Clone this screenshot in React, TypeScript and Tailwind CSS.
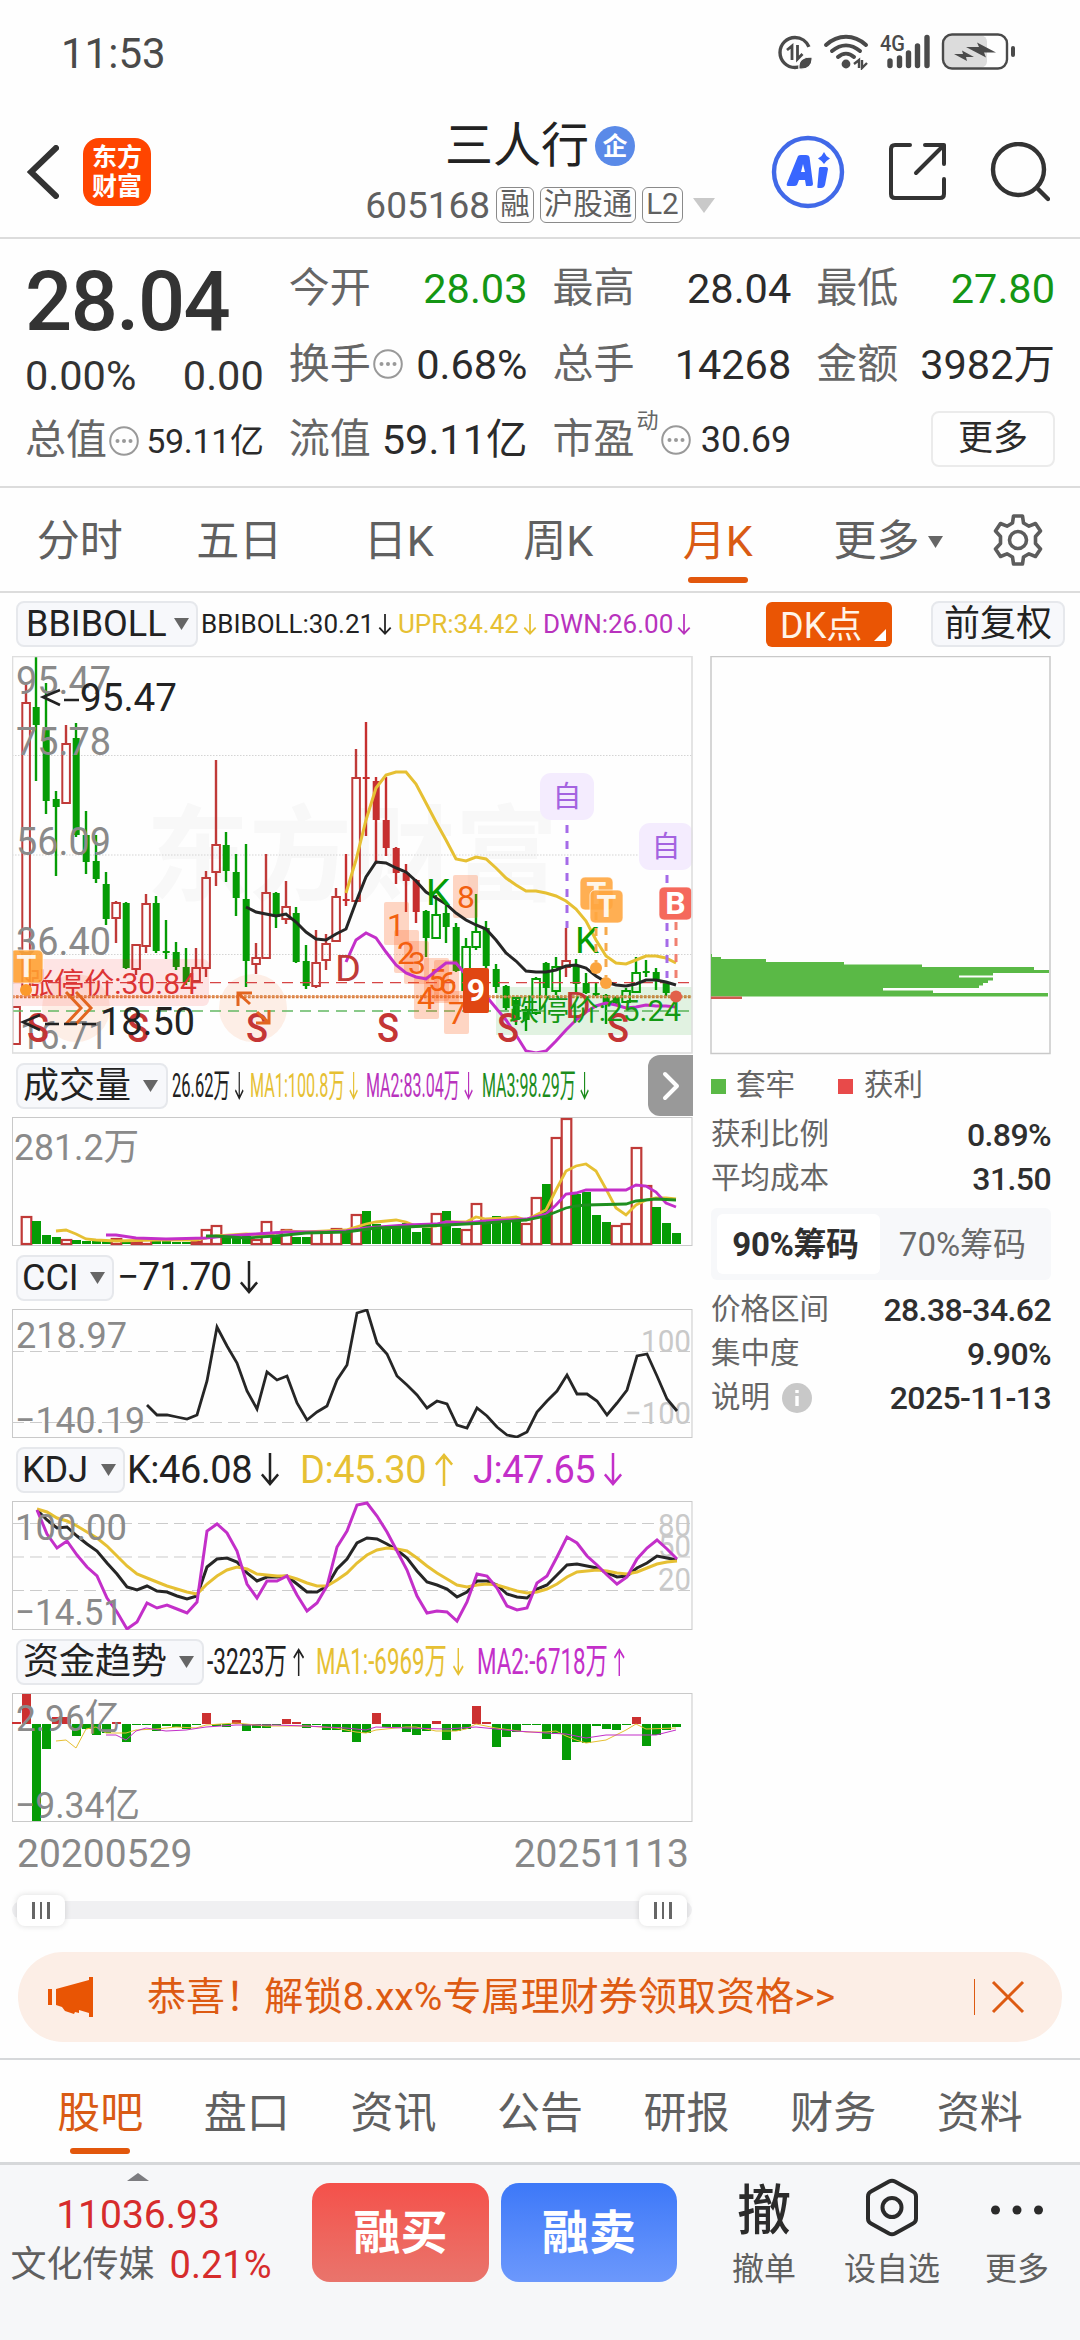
import type { ReactNode } from 'react';

const RED = '#c03a38';
const GREEN = '#059c05';
const YELLOW = '#e6c033';
const PURPLE = '#c32fc9';
const INK = '#262626';

// one bar per month, 10px apart
const barX = (i: number) => 16 + i * 10;

const toPoints = (start: number, ys: number[]) => ys.map((y, i) => `${start + i * 10},${y}`).join(' ');

type CandleKind = 'r' | 'R' | 'g' | 'h';
type Candle = [CandleKind, number, number, number, number];

// kind, high, body top, body bottom, low (r/h hollow, R/g filled)
const CANDLES: Candle[] = [
  ['r', 1006, 1006, 1044, 1044], ['r', 683, 702, 990, 990], ['g', 656, 707, 725, 781], ['g', 683, 730, 801, 814],
  ['g', 791, 799, 807, 876], ['r', 725, 743, 803, 803], ['g', 723, 738, 835, 837], ['g', 811, 835, 862, 874],
  ['g', 835, 861, 879, 883], ['g', 872, 884, 919, 925], ['r', 901, 902, 918, 943], ['g', 902, 903, 968, 969],
  ['r', 944, 944, 969, 975], ['r', 894, 903, 946, 953], ['g', 896, 903, 951, 953], ['g', 920, 951, 953, 959],
  ['g', 942, 952, 967, 970], ['g', 948, 967, 982, 985], ['r', 948, 967, 981, 982], ['r', 871, 877, 968, 977],
  ['r', 760, 844, 872, 886], ['g', 832, 845, 871, 882], ['g', 854, 872, 898, 916], ['g', 844, 899, 961, 987],
  ['r', 943, 957, 964, 974], ['r', 854, 892, 958, 958], ['g', 892, 893, 917, 928], ['r', 881, 906, 919, 924],
  ['g', 907, 913, 962, 963], ['g', 945, 961, 986, 989], ['r', 930, 962, 986, 988], ['r', 934, 943, 960, 970],
  ['r', 888, 896, 941, 941], ['R', 854, 899, 901, 906], ['r', 749, 777, 901, 901], ['R', 722, 777, 779, 836],
  ['R', 777, 781, 820, 864], ['R', 777, 820, 848, 856], ['R', 847, 848, 873, 884], ['R', 864, 873, 881, 912],
  ['R', 879, 880, 912, 923], ['g', 910, 911, 938, 957], ['h', 895, 914, 938, 938], ['g', 902, 913, 927, 943],
  ['g', 923, 927, 971, 972], ['h', 938, 946, 990, 990], ['h', 894, 931, 947, 950], ['g', 921, 928, 966, 968],
  ['g', 964, 969, 987, 993], ['g', 985, 986, 1008, 1010], ['g', 998, 1000, 1020, 1025], ['g', 1006, 1010, 1020, 1031],
  ['h', 977, 978, 1013, 1015], ['g', 962, 963, 988, 996], ['h', 957, 966, 991, 995], ['r', 928, 960, 967, 977],
  ['g', 959, 966, 984, 994], ['g', 973, 983, 993, 994], ['g', 982, 993, 995, 996], ['g', 994, 995, 1003, 1024],
  ['g', 996, 997, 1003, 1004], ['h', 988, 990, 1002, 1002], ['h', 957, 972, 992, 992], ['g', 960, 971, 973, 977],
  ['g', 968, 972, 980, 990], ['g', 982, 983, 993, 996],
];

const BOLL_MID = [907, 912, 914, 916, 914, 922, 932, 939, 940, 934, 929, 902, 877, 862, 863, 868, 872, 881, 892, 898, 904, 913, 920, 925, 929, 940, 953, 961, 971, 972, 972, 970, 966, 965, 968, 976, 982, 985, 986, 984, 980, 980, 982, 985];
const BOLL_UP = [893, 860, 820, 788, 775, 772, 772, 784, 803, 822, 840, 859, 861, 857, 859, 868, 878, 885, 891, 891, 893, 896, 901, 909, 921, 940, 956, 963, 964, 960, 956, 956, 958, 963];
const BOLL_DOWN = [962, 940, 933, 938, 952, 965, 973, 977, 979, 971, 963, 963, 975, 990, 996, 1008, 1020, 1035, 1051, 1053, 1051, 1041, 1030, 1020, 1012, 1006, 1003, 1005, 1008, 1007, 1005, 1006, 1006, 1007];

// r = hollow red, g = filled green, with the bar's top
const VOLUME: [string, number][] = [
  ['r', 1243], ['r', 1216], ['g', 1221], ['g', 1235], ['g', 1237], ['r', 1239], ['g', 1240], ['g', 1241], ['g', 1241], ['g', 1241],
  ['r', 1238], ['g', 1241], ['r', 1241], ['r', 1238], ['g', 1241], ['g', 1241], ['g', 1242], ['g', 1242], ['r', 1241], ['r', 1229],
  ['r', 1225], ['g', 1237], ['g', 1238], ['g', 1236], ['r', 1239], ['r', 1221], ['g', 1236], ['r', 1229], ['g', 1237], ['g', 1237],
  ['r', 1231], ['r', 1231], ['r', 1228], ['g', 1232], ['r', 1214], ['g', 1211], ['g', 1224], ['g', 1226], ['g', 1226], ['g', 1223],
  ['g', 1232], ['g', 1228], ['r', 1213], ['g', 1211], ['g', 1228], ['r', 1229], ['r', 1203], ['g', 1224], ['g', 1216], ['g', 1219],
  ['g', 1219], ['r', 1223], ['r', 1197], ['g', 1184], ['r', 1137], ['r', 1118], ['g', 1194], ['g', 1192], ['g', 1215], ['g', 1222],
  ['r', 1225], ['r', 1223], ['r', 1147], ['r', 1185], ['g', 1207], ['g', 1223], ['g', 1233],
];
const VOL_MA1 = '56,1231 66,1230 76,1234 86,1239 96,1240 116,1241 156,1240 196,1240 216,1236 246,1234 266,1235 286,1231 306,1232 346,1230 366,1224 376,1222 396,1220 406,1222 416,1226 436,1226 446,1222 466,1222 476,1217 486,1219 506,1218 516,1217 526,1220 536,1215 546,1210 556,1190 566,1171 576,1166 586,1164 596,1171 606,1189 616,1208 626,1215 636,1205 646,1200 656,1198 666,1198 676,1199';
const VOL_MA2 = '106,1235 116,1235 136,1238 166,1239 206,1238 226,1236 256,1234 286,1232 326,1232 346,1231 366,1228 406,1225 436,1224 446,1222 466,1223 486,1221 506,1220 526,1219 546,1214 556,1205 566,1194 576,1193 586,1190 606,1190 626,1190 636,1185 646,1186 656,1192 666,1203 676,1207';
const VOL_MA3 = '206,1236 216,1236 246,1238 276,1236 306,1233 346,1232 376,1228 406,1227 446,1225 486,1223 526,1220 546,1216 556,1212 566,1208 576,1206 586,1205 626,1204 636,1201 656,1199 676,1200';

const CCI = [1405, 1415, 1415, 1417, 1419, 1415, 1381, 1327, 1346, 1363, 1391, 1409, 1372, 1380, 1376, 1403, 1420, 1412, 1406, 1380, 1365, 1313, 1310, 1343, 1354, 1376, 1385, 1395, 1408, 1401, 1404, 1425, 1428, 1408, 1416, 1427, 1435, 1437, 1432, 1412, 1401, 1391, 1375, 1394, 1394, 1401, 1415, 1403, 1390, 1356, 1354, 1376, 1399, 1411];

const KDJ_J = [1510, 1534, 1548, 1541, 1555, 1567, 1576, 1598, 1612, 1629, 1622, 1603, 1608, 1605, 1609, 1613, 1602, 1531, 1524, 1533, 1551, 1584, 1598, 1581, 1581, 1576, 1595, 1611, 1603, 1586, 1547, 1531, 1505, 1503, 1516, 1532, 1551, 1570, 1596, 1613, 1611, 1612, 1621, 1602, 1574, 1576, 1588, 1606, 1610, 1608, 1583, 1576, 1557, 1537, 1543, 1556, 1565, 1575, 1584, 1577, 1559, 1548, 1540, 1549, 1559];
const KDJ_K = [1510, 1520, 1528, 1527, 1536, 1544, 1551, 1563, 1574, 1587, 1590, 1586, 1591, 1592, 1596, 1599, 1596, 1567, 1559, 1558, 1562, 1573, 1581, 1577, 1577, 1576, 1584, 1592, 1592, 1586, 1569, 1559, 1543, 1538, 1539, 1544, 1550, 1558, 1571, 1582, 1585, 1589, 1597, 1592, 1581, 1581, 1585, 1594, 1597, 1598, 1589, 1585, 1575, 1565, 1564, 1566, 1568, 1573, 1577, 1576, 1568, 1563, 1556, 1558, 1560];
const KDJ_D = [1509, 1512, 1518, 1521, 1526, 1532, 1538, 1546, 1556, 1566, 1574, 1578, 1582, 1586, 1589, 1592, 1594, 1584, 1576, 1570, 1567, 1569, 1574, 1575, 1576, 1576, 1579, 1583, 1586, 1586, 1580, 1573, 1563, 1555, 1550, 1548, 1549, 1551, 1558, 1566, 1573, 1579, 1585, 1587, 1585, 1584, 1585, 1588, 1591, 1593, 1592, 1589, 1584, 1577, 1572, 1571, 1570, 1571, 1573, 1574, 1572, 1568, 1564, 1562, 1561];

// far end of each month's bar; above the zero line is inflow
const FLOW = [1722, 1694, 1821, 1749, 1717, 1717, 1736, 1729, 1735, 1733, 1722, 1742, 1725, 1725, 1731, 1726, 1727, 1729, 1725, 1713, 1726, 1727, 1720, 1731, 1728, 1728, 1725, 1719, 1722, 1728, 1725, 1730, 1730, 1732, 1742, 1733, 1713, 1727, 1727, 1732, 1735, 1731, 1721, 1740, 1731, 1729, 1706, 1722, 1747, 1737, 1732, 1725, 1725, 1739, 1734, 1760, 1742, 1743, 1726, 1729, 1730, 1725, 1717, 1746, 1735, 1730, 1727];
const FLOW_ZERO = 1724;
const FLOW_MA1 = '56,1741 66,1740 76,1748 86,1729 96,1727 106,1733 126,1733 136,1730 156,1729 176,1727 196,1728 206,1725 236,1723 266,1726 306,1726 336,1728 356,1732 366,1733 376,1730 406,1727 416,1727 436,1731 456,1731 466,1729 476,1724 496,1728 526,1732 546,1732 556,1731 566,1736 576,1740 586,1743 606,1740 626,1730 636,1724 646,1729 676,1728';
const FLOW_MA2 = '106,1735 116,1735 126,1740 136,1731 146,1728 166,1731 186,1730 206,1727 236,1725 276,1725 306,1726 346,1728 366,1730 376,1727 406,1728 446,1729 476,1727 516,1731 546,1733 566,1734 586,1738 606,1735 636,1735 656,1735 676,1730';

const COUNTS = [
  { n: '1', x: 384, y: 902, tx: 396, ty: 936 },
  { n: '2', x: 394, y: 930, tx: 406, ty: 964 },
  { n: '3', x: 404, y: 941, tx: 417, ty: 974 },
  { n: '4', x: 414, y: 976, tx: 426, ty: 1009 },
  { n: '5', x: 424, y: 958, tx: 437, ty: 991 },
  { n: '6', x: 434, y: 960, tx: 448, ty: 994 },
  { n: '7', x: 444, y: 991, tx: 457, ty: 1024 },
  { n: '8', x: 453, y: 875, tx: 466, ty: 908 },
];

// top, height, width of each price level
const CHIPS = [
  [954, 3, 1], [957, 2.5, 10], [959, 3, 55], [962, 3, 133], [964.5, 3, 211], [967, 3, 323], [970, 3, 338], [973, 2.5, 282],
  [975, 3, 248], [977.5, 3, 282], [980, 3, 277], [983, 2.5, 272], [985, 3, 268], [988, 3, 172], [990.5, 3, 222], [993, 3.5, 337],
];

interface LabelProps {
  x: number;
  y: number;
  w?: number;
  size: number;
  fill: string;
  anchor?: 'start' | 'middle' | 'end';
  weight?: number;
  children: string;
}

function Label({ x, y, w, size, fill, anchor = 'start', weight = 400, children }: LabelProps) {
  return (
    <text
      x={x}
      y={y}
      fontSize={size}
      fill={fill}
      textAnchor={anchor}
      fontWeight={weight}
      textLength={w}
      lengthAdjust={w ? 'spacingAndGlyphs' : undefined}
    >
      {children}
    </text>
  );
}

function Badge({ x, y, color, letter }: { x: number; y: number; color: string; letter: string }) {
  return (
    <g>
      <rect x={x} y={y} width={33} height={33} rx={5} fill={color} stroke="#fff" strokeWidth={1} strokeOpacity={0.7} />
      <Label x={x + 16.5} y={y + 27} size={32} fill="#fff" anchor="middle" weight={700}>{letter}</Label>
    </g>
  );
}

function SelfMark({ x, y }: { x: number; y: number }) {
  return (
    <g>
      <rect x={x} y={y} width={54} height={47} rx={11} fill="#f4ecfe" />
      <Label x={x + 27} y={y + 34} size={29} fill="#a463e0" anchor="middle">自</Label>
    </g>
  );
}

function CandleBar({ candle, x }: { candle: Candle; x: number }) {
  const [kind, high, top, bottom, low] = candle;
  const color = kind === 'r' ? RED : kind === 'R' ? '#c62f2f' : GREEN;
  const hollow = kind === 'r' || kind === 'h';
  return (
    <g>
      {high < top && <line x1={x} x2={x} y1={high} y2={top} stroke={color} strokeWidth={2.4} />}
      {low > bottom && <line x1={x} x2={x} y1={bottom} y2={low} stroke={color} strokeWidth={2.4} />}
      {hollow ? (
        <rect x={x - 3.7} y={top + 1} width={7.6} height={Math.max(bottom - top - 1, 2)} fill="none" stroke={color} strokeWidth={2} />
      ) : (
        <rect x={x - 3.3} y={top} width={7} height={Math.max(bottom - top, 2)} fill={color} />
      )}
    </g>
  );
}

function PriceChart() {
  return (
    <svg className="block" width={681} height={398} viewBox="12 656 681 398">
      <Label x={146} y={893} w={412} size={104} fill="#f8f8f8" weight={700}>东方财富</Label>
      {[755.5, 855, 954.5].map((y) => (
        <line key={y} x1={12} x2={692} y1={y} y2={y} stroke="#d4d4d4" strokeWidth={1.2} strokeDasharray="1.5 1.5" />
      ))}
      <circle cx={76} cy={1008} r={34} fill="#fdeee6" />
      <circle cx={253} cy={1008} r={34} fill="#fdeee6" />
      {CANDLES.map((c, i) => (
        <CandleBar key={i} candle={c} x={barX(i)} />
      ))}
      <line x1={12} x2={692} y1={982.7} y2={982.7} stroke="#d64545" strokeWidth={1.2} strokeDasharray="11 7" />
      <line x1={12} x2={692} y1={1011} y2={1011} stroke="#63b863" strokeWidth={1.4} strokeDasharray="11 7" />
      <line x1={12} x2={692} y1={996.7} y2={996.7} stroke="#d5752f" strokeWidth={3} strokeDasharray="2.6 1.4" />
      <line x1={12} x2={692} y1={996.7} y2={996.7} stroke="#e9a275" strokeWidth={0.8} />
      <path d="M12 959 H203 a6 6 0 0 1 6 6 V1000 a6 6 0 0 1 -6 6 H12 Z" fill="#ff1010" fillOpacity={0.11} />
      <rect x={496} y={987} width={196} height={48} fill="#10a010" fillOpacity={0.12} />

      {COUNTS.map((c) => (
        <g key={c.n}>
          <rect x={c.x} y={c.y} width={25} height={43} rx={2} fill="#ff5a14" fillOpacity={0.25} />
          <Label x={c.tx} y={c.ty} size={32} fill="#f2600f" anchor="middle">{c.n}</Label>
        </g>
      ))}

      <polyline points={toPoints(246, BOLL_MID)} fill="none" stroke={INK} strokeWidth={3} />
      <polyline points={toPoints(346, BOLL_UP)} fill="none" stroke={YELLOW} strokeWidth={3} />
      <polyline points={toPoints(346, BOLL_DOWN)} fill="none" stroke={PURPLE} strokeWidth={3} />

      <rect x={463} y={968} width={26} height={45} rx={2} fill="#e04612" />
      <Label x={476} y={1001} size={32} fill="#fff" anchor="middle" weight={700}>9</Label>

      <Label x={16} y={694} w={95} size={38} fill="#8a8a8a">95.47</Label>
      <Label x={16} y={755} w={95} size={38} fill="#8a8a8a">75.78</Label>
      <Label x={16} y={855} w={95} size={38} fill="#8a8a8a">56.09</Label>
      <Label x={16} y={955} w={95} size={38} fill="#8a8a8a">36.40</Label>
      <Label x={20} y={1049} w={88} size={38} fill="#8a8a8a">16.71</Label>

      {[27, 127, 246, 377, 497, 607].map((x) => (
        <Label key={x} x={x} y={1042} w={22} size={40} fill="#c43535" weight={500}>S</Label>
      ))}
      <Label x={335} y={981} w={26} size={37} fill={RED}>D</Label>
      <Label x={565} y={1018} w={26} size={37} fill={RED}>D</Label>
      <Label x={426} y={905} w={24} size={37} fill={GREEN}>K</Label>
      <Label x={575} y={953} w={24} size={37} fill={GREEN}>K</Label>

      <Label x={24} y={994} w={173} size={29} fill="#dc3434">涨停价:30.84</Label>
      <Label x={509} y={1021} w={172} size={29} fill="#149914">跌停价:25.24</Label>

      <g fill="none" stroke="#e2651f" strokeWidth={3}>
        <path d="M66 992 L81 1008 L66 1024" />
        <path d="M76 992 L91 1008 L76 1024" />
        <path d="M238 1006 V993 H252 M239 994 L250 1004" />
        <path d="M269 1010 V1023 H256 M268 1022 L257 1012" />
      </g>

      <g fill="none" stroke="#222" strokeWidth={2.6}>
        <path d="M60 690 L43 697 L60 705 M64 700 H79" />
        <path d="M40 1015 L23 1022 L40 1030 M45 1024 H59 M64 1024 H77 M82 1024 H96" />
      </g>
      <Label x={80} y={711} w={97} size={39} fill="#222">95.47</Label>
      <Label x={100} y={1035} w={95} size={39} fill="#222">18.50</Label>

      <g strokeWidth={3} strokeDasharray="8 8">
        <line x1={567} x2={567} y1={825} y2={928} stroke="#a56be8" />
        <line x1={667} x2={667} y1={875} y2={978} stroke="#a56be8" />
        <line x1={596} x2={596} y1={912} y2={962} stroke="#f5a94c" />
        <line x1={606} x2={606} y1={927} y2={977} stroke="#f5a94c" />
        <line x1={676} x2={676} y1={922} y2={980} stroke="#f08070" />
      </g>
      <SelfMark x={540} y={773} />
      <SelfMark x={639} y={823} />
      <g fillOpacity={0.9}>
        <Badge x={580} y={877} color="#ffa640" letter="T" />
        <Badge x={590} y={890} color="#ffa640" letter="T" />
      </g>
      <Badge x={659} y={887} color="#f5695c" letter="B" />
      <g fillOpacity={0.88}>
        <Badge x={10} y={950} color="#ffa030" letter="T" />
      </g>
      <circle cx={26} cy={990} r={6} fill="#fb9a2c" />
      <circle cx={596} cy={968} r={6} fill="#fba43e" />
      <circle cx={606} cy={983} r={6} fill="#fba43e" />
      <circle cx={676} cy={996.5} r={6} fill="#e2604a" />

      <rect x={12.5} y={656.5} width={679.5} height={396.5} fill="none" stroke="#dedede" strokeWidth={1.6} />
    </svg>
  );
}

function VolumeChart() {
  return (
    <svg className="block" width={681} height={129} viewBox="12 1117 681 129">
      <rect x={12.5} y={1117.5} width={679.5} height={128} fill="none" stroke="#c9c9c9" />
      <Label x={14} y={1160} w={125} size={37} fill="#8a8a8a">281.2万</Label>
      {VOLUME.map(([kind, top], i) =>
        kind === 'r' ? (
          <rect key={i} x={barX(i) - 4.3} y={top + 1} width={9.6} height={1243 - top} fill="#fff" stroke={RED} strokeWidth={2.2} />
        ) : (
          <rect key={i} x={barX(i) - 4} y={top} width={9} height={1244 - top} fill={GREEN} />
        ),
      )}
      <polyline points={VOL_MA1} fill="none" stroke={YELLOW} strokeWidth={2.8} />
      <polyline points={VOL_MA2} fill="none" stroke={PURPLE} strokeWidth={2.8} />
      <polyline points={VOL_MA3} fill="none" stroke="#1f8f1f" strokeWidth={2.8} />
    </svg>
  );
}

function CciChart() {
  return (
    <svg className="block" width={681} height={129} viewBox="12 1309 681 129">
      <rect x={12.5} y={1309.5} width={679.5} height={128} fill="none" stroke="#c9c9c9" />
      {[1351.5, 1422.5].map((y) => (
        <line key={y} x1={12} x2={692} y1={y} y2={y} stroke="#cbcbcb" strokeDasharray="12 6" />
      ))}
      <Label x={16} y={1348} w={111} size={37} fill="#8a8a8a">218.97</Label>
      <Label x={15} y={1432.5} w={130} size={37} fill="#8a8a8a">−140.19</Label>
      <Label x={641} y={1352} w={50} size={31} fill="#c9c9c9">100</Label>
      <Label x={625} y={1423.5} w={66} size={31} fill="#c9c9c9">−100</Label>
      <polyline points={toPoints(147, CCI)} fill="none" stroke={INK} strokeWidth={2.8} />
    </svg>
  );
}

function KdjChart() {
  return (
    <svg className="block" width={681} height={129} viewBox="12 1501 681 129">
      <rect x={12.5} y={1501.5} width={679.5} height={128} fill="none" stroke="#c9c9c9" />
      {[1523.5, 1557, 1590.5].map((y) => (
        <line key={y} x1={12} x2={692} y1={y} y2={y} stroke="#cbcbcb" strokeDasharray="12 6" />
      ))}
      <Label x={658} y={1536} w={33} size={31} fill="#c9c9c9">80</Label>
      <Label x={658} y={1557} w={33} size={31} fill="#c9c9c9">50</Label>
      <Label x={658} y={1590} w={33} size={31} fill="#c9c9c9">20</Label>
      <polyline points={toPoints(37, KDJ_K)} fill="none" stroke={INK} strokeWidth={3} />
      <polyline points={toPoints(37, KDJ_D)} fill="none" stroke={YELLOW} strokeWidth={3} />
      <polyline points={toPoints(37, KDJ_J)} fill="none" stroke={PURPLE} strokeWidth={3} />
      <Label x={15} y={1540} w={112} size={37} fill="#8a8a8a">100.00</Label>
      <Label x={15} y={1625} w={108} size={37} fill="#8a8a8a">−14.51</Label>
    </svg>
  );
}

function FlowChart() {
  return (
    <svg className="block" width={681} height={129} viewBox="12 1693 681 129">
      <rect x={12.5} y={1693.5} width={679.5} height={128} fill="none" stroke="#c9c9c9" />
      {FLOW.map((end, i) => (
        <rect
          key={i}
          x={barX(i) - 4}
          y={Math.min(end, FLOW_ZERO)}
          width={9}
          height={Math.abs(end - FLOW_ZERO)}
          fill={end < FLOW_ZERO ? '#cc3030' : GREEN}
        />
      ))}
      <polyline points={FLOW_MA1} fill="none" stroke={YELLOW} strokeWidth={1} />
      <polyline points={FLOW_MA2} fill="none" stroke={PURPLE} strokeWidth={1} />
      <Label x={16} y={1731} w={104} size={37} fill="#8a8a8a">2.96亿</Label>
      <Label x={15} y={1818} w={125} size={37} fill="#8a8a8a">−9.34亿</Label>
    </svg>
  );
}

function ChipChart() {
  return (
    <svg className="block" width={341} height={399} viewBox="710 656 341 399">
      <rect x={711} y={656.5} width={339} height={397} fill="none" stroke="#c9c9c9" strokeWidth={1.5} />
      {CHIPS.map(([y, h, w]) => (
        <rect key={y} x={711} y={y} width={w} height={h} fill="#5ab946" />
      ))}
      <rect x={711} y={996.5} width={31} height={2.5} fill="#cf5a4f" />
    </svg>
  );
}

function Caret({ className = '' }: { className?: string }) {
  return (
    <svg className={className} width={15} height={12} viewBox="0 0 15 12">
      <path d="M0 0 H15 L7.5 12 Z" fill="#666" />
    </svg>
  );
}

function Arrow({ up = false, width = 16, height = 24 }: { up?: boolean; width?: number; height?: number }) {
  return (
    <svg className={up ? 'rotate-180' : ''} width={width} height={height} viewBox="0 0 16 24" preserveAspectRatio="none" fill="none" stroke="currentColor" strokeWidth={2}>
      <path d="M8 0 V22.5 M1.5 15.5 L8 22.5 L14.5 15.5" />
    </svg>
  );
}

function MoreDots() {
  return (
    <svg className="ml-[2px]" width={30} height={30} viewBox="0 0 30 30" fill="#999">
      <circle cx={15} cy={15} r={13.8} fill="none" stroke="#999" strokeWidth={2} />
      <circle cx={8.5} cy={15} r={2} />
      <circle cx={15} cy={15} r={2} />
      <circle cx={21.5} cy={15} r={2} />
    </svg>
  );
}

function IndicatorButton({ className, children }: { className: string; children: ReactNode }) {
  return (
    <div className={`flex h-[46px] shrink-0 items-center justify-between rounded-lg border-2 border-[#e6e8ec] bg-[#f7f8fb] text-[36px] leading-none whitespace-nowrap text-[#222] ${className}`}>
      {children}
    </div>
  );
}

// text squeezed horizontally to keep several readings on one row
function Reading({ box, scale, color, size = 'text-[33px]', up, children }: { box: string; scale: string; color: string; size?: string; up?: boolean; children: string }) {
  return (
    <div className={`flex shrink-0 ${box} ${color}`}>
      <div className={`flex origin-left items-center gap-[9px] leading-none whitespace-nowrap ${size} ${scale}`}>
        <span>{children}</span>
        <Arrow up={up} width={19} height={28} />
      </div>
    </div>
  );
}

function StatusBar() {
  return (
    <div className="flex h-[78px] items-end justify-between pr-[64px] pb-0.5 pl-[61px] text-[#4a4a4a]">
      <div className="text-[42px] leading-[44px]">11:53</div>
      <svg width={240} height={38} viewBox="776 32 240 38" className="mb-[6px]">
        <circle cx={795} cy={52.5} r={15} fill="none" stroke="#4a4a4a" strokeWidth={3.4} strokeDasharray="76 18" strokeDashoffset={-12} />
        <path d="M787 50 L792 46 V60 M797.5 45 V59 L802.5 54" fill="none" stroke="#4a4a4a" strokeWidth={2.8} />
        <path d="M799 69 C798 60 803 57 812 57 C813 65 808 70 799 69 Z" fill="#4a4a4a" stroke="#fff" strokeWidth={1.2} />
        <g fill="none" stroke="#4a4a4a" strokeWidth={4} strokeLinecap="round">
          <path d="M826 45 C838 34 854 34 866 45" />
          <path d="M832 51 C841 43.5 851 43.5 860 51" />
          <path d="M838 57 C843 52.5 849 52.5 854 57" />
        </g>
        <circle cx={846} cy={64} r={4.4} fill="#4a4a4a" />
        <path d="M854 64 L859 60 V68 M862 60 V68 L867 63" fill="none" stroke="#4a4a4a" strokeWidth={2.4} />
        <Label x={880} y={51} w={25} size={22} fill="#4a4a4a" weight={500}>4G</Label>
        <g stroke="#4a4a4a" strokeWidth={5.4} strokeLinecap="round">
          <path d="M890 61 V65.5 M899.5 58 V65.5 M908.5 53 V65.5 M917.5 46 V65.5 M927 37.5 V65.5" />
        </g>
        <rect x={944} y={35.5} width={43} height={32} rx={6} fill="#dcdcdc" />
        <rect x={943} y={34.5} width={64} height={34} rx={9} fill="none" stroke="#4a4a4a" strokeWidth={2.4} />
        <rect x={1011} y={46} width={4} height={11} rx={2} fill="#4a4a4a" />
        <path d="M954 54 H963 L962 50.5 L974 57 H966 L967 61 Z M966 47 H979 L977 42.5 L996 52.5 H984 L986 57.5 Z" fill="#4a4a4a" />
      </svg>
    </div>
  );
}

function Tag({ children }: { children: string }) {
  return <span className="flex h-[36px] items-center rounded-md border-[1.5px] border-[#8a8a8a] px-[3px] text-[29.5px] leading-none">{children}</span>;
}

function Header() {
  return (
    <div className="grid h-[161px] grid-cols-[313px_1fr_340px] border-b-2 border-[#dcdcdc] pl-[27px]">
      <div className="flex items-center gap-6 pt-[28px]">
        <svg width={32} height={54} viewBox="0 0 32 54" fill="none" stroke="#333" strokeWidth={6} strokeLinecap="round">
          <path d="M29 3 L4 27 L29 51" />
        </svg>
        <div className="flex h-[68px] w-[68px] flex-col items-center justify-center rounded-2xl bg-[#ff4500] text-[25px] leading-[29px] font-bold text-white">
          <span>东方</span>
          <span>财富</span>
        </div>
      </div>
      <div className="flex flex-col items-center pt-[40px] text-[#606060]">
        <div className="flex h-[56px] items-center gap-1.5 text-[48px] leading-none text-[#222]">
          <span>三人行</span>
          <span className="flex h-10 w-10 items-center justify-center rounded-full bg-[#5a8ae8] text-[25px] font-bold text-white">企</span>
        </div>
        <div className="mt-[12px] flex h-[38px] items-center gap-[6px] text-[37px] leading-none whitespace-nowrap">
          <span>605168</span>
          <Tag>融</Tag>
          <Tag>沪股通</Tag>
          <Tag>L2</Tag>
          <svg className="ml-1" width={22} height={15} viewBox="0 0 22 15">
            <path d="M0 0 H22 L11 15 Z" fill="#c9c9c9" />
          </svg>
        </div>
      </div>
      <div className="flex items-center gap-[43px] pt-[28px] pl-[31px]">
        <svg width={74} height={74} viewBox="771 134 74 74">
          <circle cx={808} cy={171} r={34} fill="none" stroke="#4169e8" strokeWidth={4.4} />
          <g fill="#3866ff">
            <path d="M798 155 Q799 154 801 154 H806 Q809 154 809.5 156 L813 183 Q813 185 811 185 H806 L805 179 H799 L797 184 Q796 185 794 185 H788 Q786 185 787 182 Z M803 163 L801 171 H805 Z" fillRule="evenodd" />
            <path d="M820 166 H826 Q828 166 828 168 L825 184 Q824 187 821 187 H818 Q817 187 817.5 184 L819 167 Z" />
            <path d="M824 151 L826.5 155 L830 157.5 L826.5 160 L824 163 L821.5 160 L818 157.5 L821.5 155 Z" />
          </g>
        </svg>
        <svg width={59} height={59} viewBox="887 142 59 59" fill="none" stroke="#333" strokeWidth={4} strokeLinecap="round" strokeLinejoin="round">
          <path d="M909 145 H894 Q890 145 890 149 V194 Q890 198 894 198 H939 Q943 198 943 194 V179 M924 145 H943 V164 M943 145 L915 173" />
        </svg>
        <svg width={60} height={60} viewBox="990 141 60 60" fill="none" stroke="#333" strokeWidth={4.4} strokeLinecap="round">
          <circle cx={1018.5} cy={168.5} r={25.5} />
          <path d="M1038 188 L1048 198" />
        </svg>
      </div>
    </div>
  );
}

function Cell({ label, icon, sup, value, color = 'text-[#2b2b2b]', size = 'text-[41.5px]' }: { label: string; icon?: boolean; sup?: string; value: string; color?: string; size?: string }) {
  return (
    <div className="flex h-[75.500px] items-center justify-between leading-none whitespace-nowrap">
      <div className="flex items-center text-[41px] text-[#666]">
        <span>{label}</span>
        {sup && <span className="mb-[38px] ml-[2px] text-[22px]">{sup}</span>}
        {icon && <MoreDots />}
      </div>
      <span className={`${size} ${color}`}>{value}</span>
    </div>
  );
}

function Quote() {
  return (
    <div className="grid h-[249px] grid-cols-4 gap-[25px] border-b-2 border-[#dcdcdc] px-[25px] pt-[12px]">
      <div className="text-[#333]">
        <div className="h-[98px] pt-[4px] text-[83px] leading-[94px] font-medium tracking-[-1.5px]">28.04</div>
        <div className="flex h-[54px] items-center justify-between text-[41.5px] leading-none">
          <span>0.00%</span>
          <span>0.00</span>
        </div>
        <Cell label="总值" icon value="59.11亿" size="text-[34px] tracking-[-0.3px]" />
      </div>
      <div>
        <Cell label="今开" value="28.03" color="text-[#149614]" />
        <Cell label="换手" icon value="0.68%" />
        <Cell label="流值" value="59.11亿" />
      </div>
      <div>
        <Cell label="最高" value="28.04" />
        <Cell label="总手" value="14268" />
        <Cell label="市盈" sup="动" icon value="30.69" size="text-[36px]" />
      </div>
      <div>
        <Cell label="最低" value="27.80" color="text-[#149614]" />
        <Cell label="金额" value="3982万" />
        <div className="flex h-[74px] items-center justify-end">
          <div className="flex h-[56px] w-[124px] items-center justify-center rounded-lg border-2 border-[#ebebeb] text-[35px] text-[#2b2b2b]">更多</div>
        </div>
      </div>
    </div>
  );
}

function PeriodTabs() {
  return (
    <div className="flex h-[105px] border-b-2 border-[#dcdcdc] text-[43px] leading-none text-[#606060]">
      {['分时', '五日', '日K', '周K', '月K'].map((tab) => (
        <div key={tab} className={`flex w-[159.5px] flex-col items-center pt-[32px] ${tab === '月K' ? 'text-[#d95b14]' : ''}`}>
          <span>{tab}</span>
          {tab === '月K' && <span className="mt-[14px] h-[6px] w-[60px] rounded-sm bg-[#e2570c]" />}
        </div>
      ))}
      <div className="flex gap-2 pt-[32px] pl-[36px]">
        <span>更多</span>
        <Caret className="mt-[16px]" />
      </div>
      <svg className="mt-[25px] ml-[48px]" width={54} height={54} viewBox="0 0 54 54" fill="none" stroke="#5c5c5c" strokeWidth={3.6} strokeLinejoin="round">
        <path d="M22.5 3 H31.5 L32.5 10 L38 13.2 L44.5 10.5 L49.5 18 L44.5 23.5 V30.5 L49.5 36 L44.5 43.5 L38 40.8 L32.5 44 L31.5 51 H22.5 L21.5 44 L16 40.8 L9.5 43.5 L4.5 36 L9.5 30.5 V23.5 L4.5 18 L9.5 10.5 L16 13.2 L21.5 10 Z" />
        <circle cx={27} cy={27} r={8.5} />
      </svg>
    </div>
  );
}

function MainIndicatorRow() {
  return (
    <div className="flex h-[62px] shrink-0 items-center pl-4">
      <IndicatorButton className="w-[182px] pr-[7px] pl-[8px]">
        <span>BBIBOLL</span>
        <Caret />
      </IndicatorButton>
      <div className="flex w-[568px] shrink-0 items-center text-[26px] leading-none whitespace-nowrap">
        <div className="flex w-[200px] shrink-0 items-center gap-1 pl-[3px] text-[#222]"><span>BBIBOLL:30.21</span><Arrow width={14} height={21} /></div>
        <div className="flex w-[145px] shrink-0 items-center gap-1 text-[#e6c033]"><span>UPR:34.42</span><Arrow width={14} height={21} /></div>
        <div className="flex items-center gap-1 text-[#b832bd]"><span>DWN:26.00</span><Arrow width={14} height={21} /></div>
      </div>
      <div className="flex h-[45px] w-[126px] shrink-0 items-end justify-between rounded-md bg-[#ea5504] pr-[6px] pl-[14px] text-[36px] leading-[42px] text-[#fff4e8]">
        <span className="whitespace-nowrap">DK点</span>
        <svg className="mb-[6px] -ml-2 shrink-0" width={12} height={12} viewBox="0 0 12 12">
          <path d="M12 0 V12 H0 Z" fill="#fff" />
        </svg>
      </div>
      <IndicatorButton className="ml-[39px] w-[134px] pl-[11px]">
        <span>前复权</span>
      </IndicatorButton>
    </div>
  );
}

function Slider() {
  return (
    <div className="mt-[27px] flex h-[18px] w-[680px] items-center justify-between rounded-full bg-[#f0f0f2] px-[5px]">
      {[0, 1].map((i) => (
        <div key={i} className="flex h-[31px] w-[48px] items-center justify-center gap-[5px] rounded-lg bg-white shadow-[0_0_6px_rgba(0,0,0,0.14)]">
          <span className="h-[17px] w-[2.5px] bg-[#666]" />
          <span className="h-[17px] w-[2.5px] bg-[#666]" />
          <span className="h-[17px] w-[2.5px] bg-[#666]" />
        </div>
      ))}
    </div>
  );
}

function Charts() {
  return (
    <div className="relative w-[681px]">
      <PriceChart />
      <div className="flex h-[63px] items-center pl-1">
        <IndicatorButton className="w-[152px] pr-2 pl-[5px]">
          <span>成交量</span>
          <Caret />
        </IndicatorButton>
        <Reading box="ml-[4px] w-[78px]" scale="scale-x-[0.5]" color="text-[#222]">26.62万</Reading>
        <Reading box="w-[116px]" scale="scale-x-[0.49]" color="text-[#e6c033]">MA1:100.8万</Reading>
        <Reading box="w-[116px]" scale="scale-x-[0.485]" color="text-[#b832bd]">MA2:83.04万</Reading>
        <Reading box="w-[100px]" scale="scale-x-[0.485]" color="text-[#1c8c1c]">MA3:98.29万</Reading>
      </div>
      <VolumeChart />
      <div className="flex h-[63px] items-center pl-1">
        <IndicatorButton className="w-[98px] pr-[7px] pl-[4px]">
          <span>CCI</span>
          <Caret />
        </IndicatorButton>
        <div className="ml-[3px] flex items-center gap-2 text-[39px] leading-none tracking-[-1px] text-[#222]"><span>−71.70</span><Arrow width={20} height={33} /></div>
      </div>
      <CciChart />
      <div className="flex h-[63px] items-center pl-1 whitespace-nowrap">
        <IndicatorButton className="w-[109px] pr-[7px] pl-[4px]">
          <span>KDJ</span>
          <Caret />
        </IndicatorButton>
        <div className="ml-[2px] flex w-[173px] items-center gap-2 text-[38px] leading-none tracking-[-0.5px] text-[#222]"><span>K:46.08</span><Arrow width={20} height={33} /></div>
        <div className="flex w-[173px] items-center gap-2 text-[38px] leading-none tracking-[-0.5px] text-[#e6c033]"><span>D:45.30</span><Arrow up width={20} height={33} /></div>
        <div className="flex items-center gap-2 text-[38px] leading-none tracking-[-0.5px] text-[#c32fc9]"><span>J:47.65</span><Arrow width={20} height={33} /></div>
      </div>
      <KdjChart />
      <div className="flex h-[63px] items-center pl-1">
        <IndicatorButton className="w-[188px] pr-2 pl-[5px]">
          <span>资金趋势</span>
          <Caret />
        </IndicatorButton>
        <Reading box="ml-[3px] w-[109px]" scale="scale-x-[0.63]" color="text-[#222]" size="text-[36px]" up>-3223万</Reading>
        <Reading box="w-[161px]" scale="scale-x-[0.62]" color="text-[#e6c033]" size="text-[36px]">MA1:-6969万</Reading>
        <Reading box="w-[150px]" scale="scale-x-[0.62]" color="text-[#c32fc9]" size="text-[36px]" up>MA2:-6718万</Reading>
      </div>
      <FlowChart />
      <div className="mt-[12px] flex h-[40px] justify-between pr-[4px] pl-[5px] text-[39px] leading-[40px] text-[#888]">
        <span>20200529</span>
        <span>20251113</span>
      </div>
      <Slider />
      <div className="absolute top-[399px] right-0 flex h-[61px] w-[45px] items-center justify-center rounded-l-xl bg-[#999]">
        <svg width={18} height={30} viewBox="0 0 18 30" fill="none" stroke="#fff" strokeWidth={4} strokeLinecap="round" strokeLinejoin="round">
          <path d="M3 3 L15 15 L3 27" />
        </svg>
      </div>
    </div>
  );
}

function ChipRow({ label, value, info }: { label: string; value: string; info?: boolean }) {
  return (
    <div className="flex h-[44px] items-center justify-between pl-px leading-none">
      <div className="flex items-center gap-3 text-[29.5px] text-[#666]">
        <span>{label}</span>
        {info && (
          <svg width={30} height={30} viewBox="0 0 30 30">
            <circle cx={15} cy={15} r={15} fill="#c8c8c8" />
            <path d="M15 13 V23 M15 7 V10" stroke="#fff" strokeWidth={3.4} />
          </svg>
        )}
      </div>
      <span className="text-[32px] font-medium tracking-[-0.6px] text-[#2f2f2f]">{value}</span>
    </div>
  );
}

function ChipPanel() {
  return (
    <div className="ml-[17px] w-[341px]">
      <ChipChart />
      <div className="mt-[9px] flex h-[44px] items-center text-[29.5px] leading-none text-[#666]">
        <span className="ml-px h-[15px] w-[15px] bg-[#5ab946]" />
        <span className="ml-[10px] w-[102px]">套牢</span>
        <span className="h-[15px] w-[15px] bg-[#e84a4a]" />
        <span className="ml-[11px]">获利</span>
      </div>
      <div className="mt-[5px]">
        <ChipRow label="获利比例" value="0.89%" />
        <ChipRow label="平均成本" value="31.50" />
      </div>
      <div className="mt-[7px] ml-px flex h-[72px] items-center rounded-md bg-[#f7f8fa] p-[6px] text-[33px] leading-none">
        <span className="flex h-[60px] w-[163px] items-center justify-center rounded-md bg-white pr-[6px] font-bold tracking-[-0.4px] text-[#2f2f2f]">90%筹码</span>
        <span className="flex flex-1 items-center justify-center text-[#6a6a6a]">70%筹码</span>
      </div>
      <div className="mt-[8px]">
        <ChipRow label="价格区间" value="28.38-34.62" />
        <ChipRow label="集中度" value="9.90%" />
        <ChipRow label="说明" value="2025-11-13" info />
      </div>
    </div>
  );
}

function Banner() {
  return (
    <div className="mx-[18px] mt-[27px] flex h-[90px] shrink-0 items-center rounded-full bg-[#fceee6] pl-[30px] text-[#dd5a12]">
      <svg width={46} height={42} viewBox="0 0 46 42" fill="#e95504">
        <path d="M0 13 H4 V29 H0 Z M8 13 L41 4 V1 H45 V41 H41 V37 L31 34 V37 L27 36 L26 38 L17 35 L14 31 L8 29 Z" />
      </svg>
      <span className="ml-[53px] flex-1 text-[39px] leading-none tracking-[0.1px] whitespace-nowrap">恭喜！解锁8.xx%专属理财券领取资格&gt;&gt;</span>
      <span className="h-9 w-[1.5px] bg-[#dd5a12]" />
      <svg className="mr-[37px] ml-[16px]" width={34} height={34} viewBox="0 0 34 34" stroke="#dd5a12" strokeWidth={3}>
        <path d="M2 2 L32 32 M32 2 L2 32" />
      </svg>
    </div>
  );
}

function InfoTabs() {
  return (
    <div className="mt-[16px] flex h-[107px] shrink-0 border-t-2 border-b-[3px] border-[#d6d8da] px-[27px] text-[43px] leading-none text-[#606060]">
      {['股吧', '盘口', '资讯', '公告', '研报', '财务', '资料'].map((tab, i) => (
        <div key={tab} className={`flex flex-1 flex-col items-center pt-[32px] ${i === 0 ? 'text-[#d95b14]' : ''}`}>
          <span>{tab}</span>
          {i === 0 && <span className="mt-[13px] h-[6px] w-[60px] rounded-sm bg-[#e2570c]" />}
        </div>
      ))}
    </div>
  );
}

function BottomBar() {
  return (
    <div className="flex flex-1 bg-[#f6f7f9] leading-none text-[#606060]">
      <div className="flex w-[276px] flex-col items-center pt-[8px]">
        <svg width={22} height={8} viewBox="0 0 22 8">
          <path d="M0 8 L11 0 L22 8 Z" fill="#7c7c80" />
        </svg>
        <span className="mt-[15px] text-[39px] text-[#d62c2c]">11036.93</span>
        <div className="mt-[11px] flex items-center gap-[15px] pl-[6px] whitespace-nowrap">
          <span className="text-[36px]">文化传媒</span>
          <span className="text-[38px] text-[#d62c2c]">0.21%</span>
        </div>
      </div>
      <div className="ml-[36px] flex gap-3 pt-[18px] text-[47px] font-bold text-white">
        <div className="flex h-[99px] w-[177px] items-center justify-center rounded-[18px] bg-linear-to-b from-[#f4504a] to-[#e9746c]">融买</div>
        <div className="flex h-[99px] w-[176px] items-center justify-center rounded-[18px] bg-linear-to-b from-[#3d78f8] to-[#6c98fc]">融卖</div>
      </div>
      <div className="flex flex-1 text-[32px]">
        <div className="ml-[48px] flex w-[78px] flex-col items-center pt-[18px]">
          <span className="flex h-[58px] items-center text-[54px] font-medium text-[#2b2b2b]">撤</span>
          <span className="mt-[12px] whitespace-nowrap">撤单</span>
        </div>
        <div className="ml-[32px] flex w-[114px] flex-col items-center pt-[13px]">
          <svg width={54} height={59} viewBox="0 0 54 59" fill="none" stroke="#2b2b2b" strokeWidth={4}>
            <path d="M24 3.5 Q27 2 30 3.5 L48 13.5 Q51 15 51 18.5 V40.5 Q51 44 48 45.5 L30 55.5 Q27 57 24 55.5 L6 45.5 Q3 44 3 40.5 V18.5 Q3 15 6 13.5 Z" />
            <circle cx={27} cy={29.5} r={9.5} />
          </svg>
          <span className="mt-[16px] whitespace-nowrap">设自选</span>
        </div>
        <div className="ml-[8px] flex w-[120px] flex-col items-center pt-[13px]">
          <svg width={54} height={59} viewBox="0 0 54 59" fill="#2b2b2b">
            <circle cx={5.5} cy={32} r={4.5} />
            <circle cx={27} cy={32} r={4.5} />
            <circle cx={48.5} cy={32} r={4.5} />
          </svg>
          <span className="mt-[16px]">更多</span>
        </div>
      </div>
    </div>
  );
}

export default function App() {
  return (
    <div className="flex h-[2340px] w-[1080px] flex-col overflow-hidden bg-[#fefefe] font-[Roboto,'Noto_Sans_CJK_SC',sans-serif]">
      <StatusBar />
      <Header />
      <Quote />
      <PeriodTabs />
      <MainIndicatorRow />
      <div className="flex h-[1270px] shrink-0 pt-px pl-3">
        <Charts />
        <ChipPanel />
      </div>
      <Banner />
      <InfoTabs />
      <BottomBar />
    </div>
  );
}
